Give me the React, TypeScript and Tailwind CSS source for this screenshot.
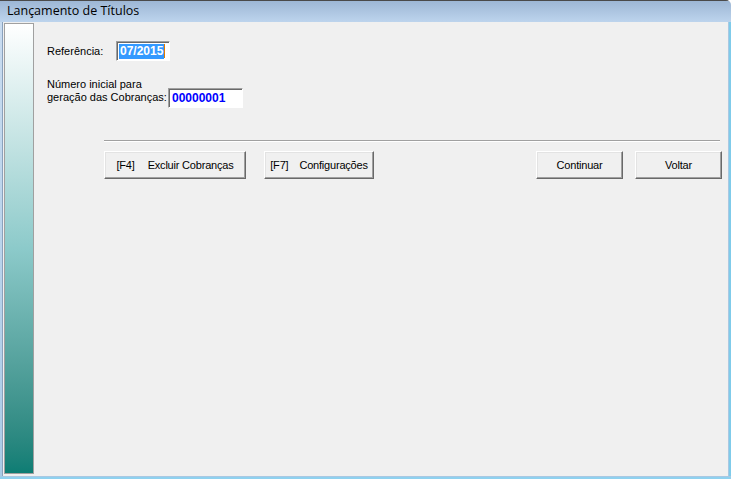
import React from "react";

// Windows-classic style dialog: "Lançamento de Títulos"
const font = { fontFamily: '"Liberation Sans", Arial, sans-serif' };

function ClassicButton({ children, width }: { children: React.ReactNode; width: string }) {
  return (
    <button
      className={`${width} h-[28px] flex items-center justify-center bg-[#f0f0f0] text-[11px] tracking-[-0.2px] text-black border border-t-white border-l-white border-r-[#696969] border-b-[#696969] shadow-[inset_-1px_-1px_0_#a0a0a0,inset_1px_1px_0_#e3e3e3]`}
    >
      {children}
    </button>
  );
}

export default function App() {
  return (
    <div className="w-[731px] h-[479px] flex flex-col overflow-hidden bg-[#f0f0f0] rounded-tr-[5px]" style={font}>
      {/* title bar */}
      <div className="h-[22px] flex items-center pl-[7px] bg-gradient-to-b from-[#9db7d5] to-[#bdd4ed] border-t border-t-[#4a4a4a] text-[12px] text-black">
        <span className="text-[12.5px]" style={{ fontFamily: '"Open Sans", "Liberation Sans", sans-serif' }}>
          Lançamento de Títulos
        </span>
      </div>

      <div className="flex flex-1 min-h-0">
        {/* left frame */}
        <div className="w-[3px] bg-gradient-to-b from-[#c9dcf0] to-[#a9cbe6] border-r border-r-[#8aa2bd]" />

        {/* gradient sidebar */}
        <div className="w-[30px] mt-[1px] mb-[2px] ml-[1px] border border-[#a0a0a0] bg-gradient-to-b from-white via-[#8ccaca] to-[#0c7d74]" />

        {/* content */}
        <div className="flex-1 flex flex-col pl-[13px]">
          <div className="mt-[19px] flex items-center">
            <span className="text-[11px] text-black w-[69px]">Referência:</span>
            <div className="w-[54px] h-[20px] bg-white border border-t-[#a0a0a0] border-l-[#a0a0a0] border-r-white border-b-white shadow-[inset_1px_1px_0_#696969] flex items-center pl-[2px]">
              <span className="bg-[#3399ff] text-white font-bold text-[12px] leading-[15px] px-[1px]">07/2015</span>
              <span className="w-[1px] h-[14px] bg-[#e07b00]" />
            </div>
          </div>

          <div className="mt-[17px] flex items-end">
            <div className="text-[11px] leading-[13px] text-black w-[121px] pb-[4px]">
              Número inicial para
              <br />
              geração das Cobranças:
            </div>
            <div className="w-[75px] h-[20px] bg-white border border-t-[#a0a0a0] border-l-[#a0a0a0] border-r-white border-b-white shadow-[inset_1px_1px_0_#696969] flex items-center pl-[3px]">
              <span className="text-[#0000ff] font-bold text-[12px]">00000001</span>
            </div>
          </div>

          {/* separator */}
          <div className="mt-[32px] ml-[57px] mr-[8px] h-[2px] border-t border-t-[#a0a0a0] border-b border-b-white" />

          <div className="mt-[9px] ml-[57px] mr-[6px] flex">
            <ClassicButton width="w-[142px]">
              <span>[F4]</span>
              <span className="ml-[13px]">Excluir Cobranças</span>
            </ClassicButton>
            <div className="ml-[18px]">
              <ClassicButton width="w-[110px]">
                <span>[F7]</span>
                <span className="ml-[11px]">Configurações</span>
              </ClassicButton>
            </div>
            <div className="flex-1" />
            <ClassicButton width="w-[87px]">Continuar</ClassicButton>
            <div className="ml-[12px]">
              <ClassicButton width="w-[87px]">Voltar</ClassicButton>
            </div>
          </div>
        </div>

        {/* right frame */}
        <div className="w-[3px] bg-[#7fcbea] border-l border-l-[#a9c8e2]" />
      </div>

      {/* bottom frame */}
      <div className="h-[3px] bg-[#8fd1ef] border-t border-t-[#a9c8e2]" />
    </div>
  );
}
